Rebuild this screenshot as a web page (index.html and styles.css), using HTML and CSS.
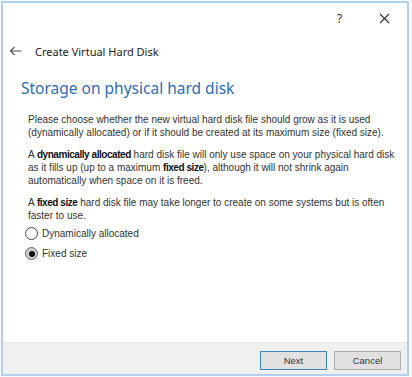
FILE: index.html
```html
<!DOCTYPE html>
<html lang="en">
<head>
  <meta charset="UTF-8">
  <meta name="viewport" content="width=device-width, initial-scale=1.0">
  <title>Create Virtual Hard Disk</title>
  <link rel="stylesheet" href="styles.css">
</head>
<body>
  <div class="window">
    <div class="titlebar">
      <span class="title-btn">?</span>
      <span class="title-btn close">
        <svg width="11" height="11" viewBox="0 0 11 11"><path d="M1 1 L10 10 M10 1 L1 10" stroke="#333" stroke-width="1.1" fill="none"/></svg>
      </span>
    </div>

    <div class="nav">
      <svg class="back" width="13" height="10" viewBox="0 0 13 10"><path d="M12.5 5 H1.5 M5.5 1 L1.5 5 L5.5 9" stroke="#555" stroke-width="1.1" fill="none"/></svg>
      <span class="nav-title">Create Virtual Hard Disk</span>
    </div>

    <div class="content">
      <h1>Storage on physical hard disk</h1>
      <p>Please choose whether the new virtual hard disk file should grow as it is used<br>(dynamically allocated) or if it should be created at its maximum size (fixed size).</p>
      <p>A <b>dynamically allocated</b> hard disk file will only use space on your physical hard disk<br>as it fills up (up to a maximum <b>fixed size</b>), although it will not shrink again<br>automatically when space on it is freed.</p>
      <p>A <b>fixed size</b> hard disk file may take longer to create on some systems but is often<br>faster to use.</p>

      <div class="options">
        <label class="option"><span class="radio"></span> Dynamically allocated</label>
        <label class="option"><span class="radio checked"></span> Fixed size</label>
      </div>
    </div>

    <div class="footer">
      <button class="btn default">Next</button>
      <button class="btn">Cancel</button>
    </div>
  </div>
</body>
</html>
```

FILE: styles.css
```css
body {
  margin: 0;
  background-color: #f7fbff;
  font-family: "Liberation Sans", Arial, sans-serif;
}

.window {
  width: 404px;
  height: 371px;
  margin: 1px 0 0 1px;
  border: 2px solid #b3d1ee;
  background-color: #fff;
  display: flex;
  flex-direction: column;
}

.titlebar {
  height: 30px;
  display: flex;
  justify-content: flex-end;
  align-items: center;
}

.title-btn {
  width: 45px;
  font-family: "Noto Sans", sans-serif;
  font-size: 12px;
  color: #333;
  display: flex;
  justify-content: center;
  align-items: center;
}

.nav {
  height: 36px;
  display: flex;
  align-items: center;
  padding-left: 6px;
}

.back {
  margin-right: 13px;
}

.nav-title {
  font-family: "Noto Sans", sans-serif;
  font-size: 11px;
  color: #222;
}

.content {
  flex: 1;
  padding: 0 4px 0 25px;
}

h1 {
  margin: 8px 0 14px -7px;
  font-family: "Noto Sans", sans-serif;
  font-weight: normal;
  font-size: 15.5px;
  color: #2f6db5;
}

p {
  margin: 0 0 9px;
  font-size: 10px;
  line-height: 13px;
  color: #333;
  white-space: nowrap;
}

p b {
  color: #111;
  letter-spacing: -0.45px;
}

.options {
  display: flex;
  flex-direction: column;
  gap: 7px;
  margin: -4px 0 0 -3px;
}

.option {
  display: flex;
  align-items: center;
  font-size: 10px;
  line-height: 13px;
  color: #333;
  gap: 4px;
}

.radio {
  width: 11px;
  height: 11px;
  border: 1px solid #444;
  border-radius: 50%;
  background-color: #fff;
  display: flex;
  justify-content: center;
  align-items: center;
}

.radio.checked {
  background-color: #cfcfcf;
  border-color: #666;
}

.radio.checked::after {
  content: "";
  width: 6px;
  height: 6px;
  border-radius: 50%;
  background-color: #111;
}

.footer {
  height: 32px;
  background-color: #f0f0f0;
  border-top: 1px solid #e6e6e6;
  display: flex;
  justify-content: flex-end;
  align-items: center;
  gap: 7px;
  padding: 3px 6px 0 0;
  box-sizing: border-box;
}

.btn {
  width: 67px;
  height: 19px;
  font-family: "Liberation Sans", Arial, sans-serif;
  font-size: 9.5px;
  color: #333;
  background-color: #e1e1e1;
  border: 1px solid #adadad;
  padding: 0;
}

.btn.default {
  border: 1px solid #3c82c4;
}
```
